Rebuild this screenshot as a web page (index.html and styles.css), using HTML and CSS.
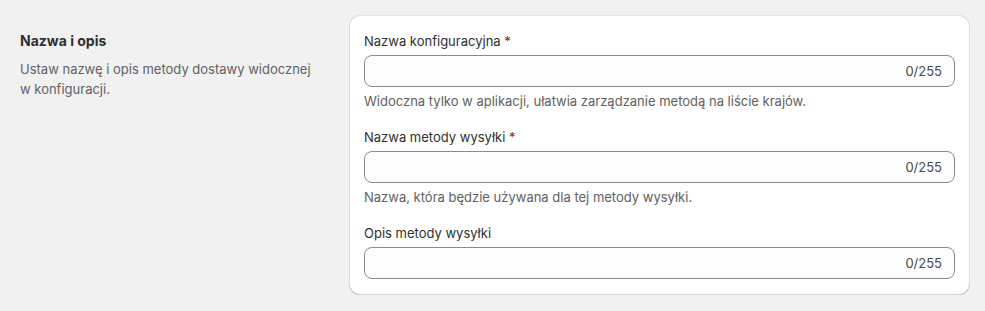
FILE: index.html
```html
<!DOCTYPE html>
<html lang="pl">
<head>
<meta charset="utf-8">
<title>Nazwa i opis</title>
<link rel="stylesheet" href="styles.css">
</head>
<body>
<div class="page">
  <div class="annotation">
    <h2 class="title">Nazwa i opis</h2>
    <p class="desc">Ustaw nazwę i opis metody dostawy widocznej w konfiguracji.</p>
  </div>
  <div class="card">
    <div class="field">
      <label class="label">Nazwa konfiguracyjna <span class="req">*</span></label>
      <div class="input"><span class="counter">0/255</span></div>
      <div class="help">Widoczna tylko w aplikacji, ułatwia zarządzanie metodą na liście krajów.</div>
    </div>
    <div class="field">
      <label class="label">Nazwa metody wysyłki <span class="req">*</span></label>
      <div class="input"><span class="counter">0/255</span></div>
      <div class="help">Nazwa, która będzie używana dla tej metody wysyłki.</div>
    </div>
    <div class="field">
      <label class="label">Opis metody wysyłki</label>
      <div class="input"><span class="counter">0/255</span></div>
    </div>
  </div>
</div>
</body>
</html>
```

FILE: styles.css
```css
* { box-sizing: border-box; }
html, body {
  margin: 0;
  padding: 0;
  background: #f1f1f1;
  font-family: Inter, "Noto Sans", sans-serif;
  color: #303030;
  font-size: 13px;
  line-height: 20px;
}
.page {
  display: flex;
  align-items: flex-start;
  gap: 16px;
  padding: 15px 15px 0 20px;
}
.annotation {
  width: 313px;
  flex: none;
  padding-top: 16px;
}
.title {
  margin: 0;
  font-size: 14px;
  font-weight: 650;
  line-height: 20px;
  color: #303030;
}
.desc {
  margin: 8px 0 0;
  max-width: 300px;
  color: #616161;
  font-size: 13px;
  line-height: 20px;
}
.card {
  flex: 1;
  background: #ffffff;
  border-radius: 12px;
  padding: 16px 15px;
  display: flex;
  flex-direction: column;
  gap: 16px;
  box-shadow:
    0 1px 0 0 rgba(26, 26, 26, 0.07),
    inset 0 1px 0 0 rgba(204, 204, 204, 0.5),
    inset 0 -1px 0 0 rgba(0, 0, 0, 0.17),
    inset -1px 0 0 0 rgba(0, 0, 0, 0.13),
    inset 1px 0 0 0 rgba(0, 0, 0, 0.13);
}
.field {
  display: flex;
  flex-direction: column;
  gap: 4px;
}
.label {
  display: block;
  color: #303030;
  font-size: 13px;
  line-height: 20px;
}
.req { color: #8e1f0b; }
.input {
  height: 32px;
  border: 1px solid #8a8a8a;
  border-radius: 8px;
  background: #fdfdfd;
  display: flex;
  align-items: center;
  justify-content: flex-end;
  padding: 0 12px;
}
.counter {
  color: #4a4a4a;
  font-size: 13px;
}
.help {
  color: #616161;
  font-size: 13px;
  line-height: 20px;
}
```
